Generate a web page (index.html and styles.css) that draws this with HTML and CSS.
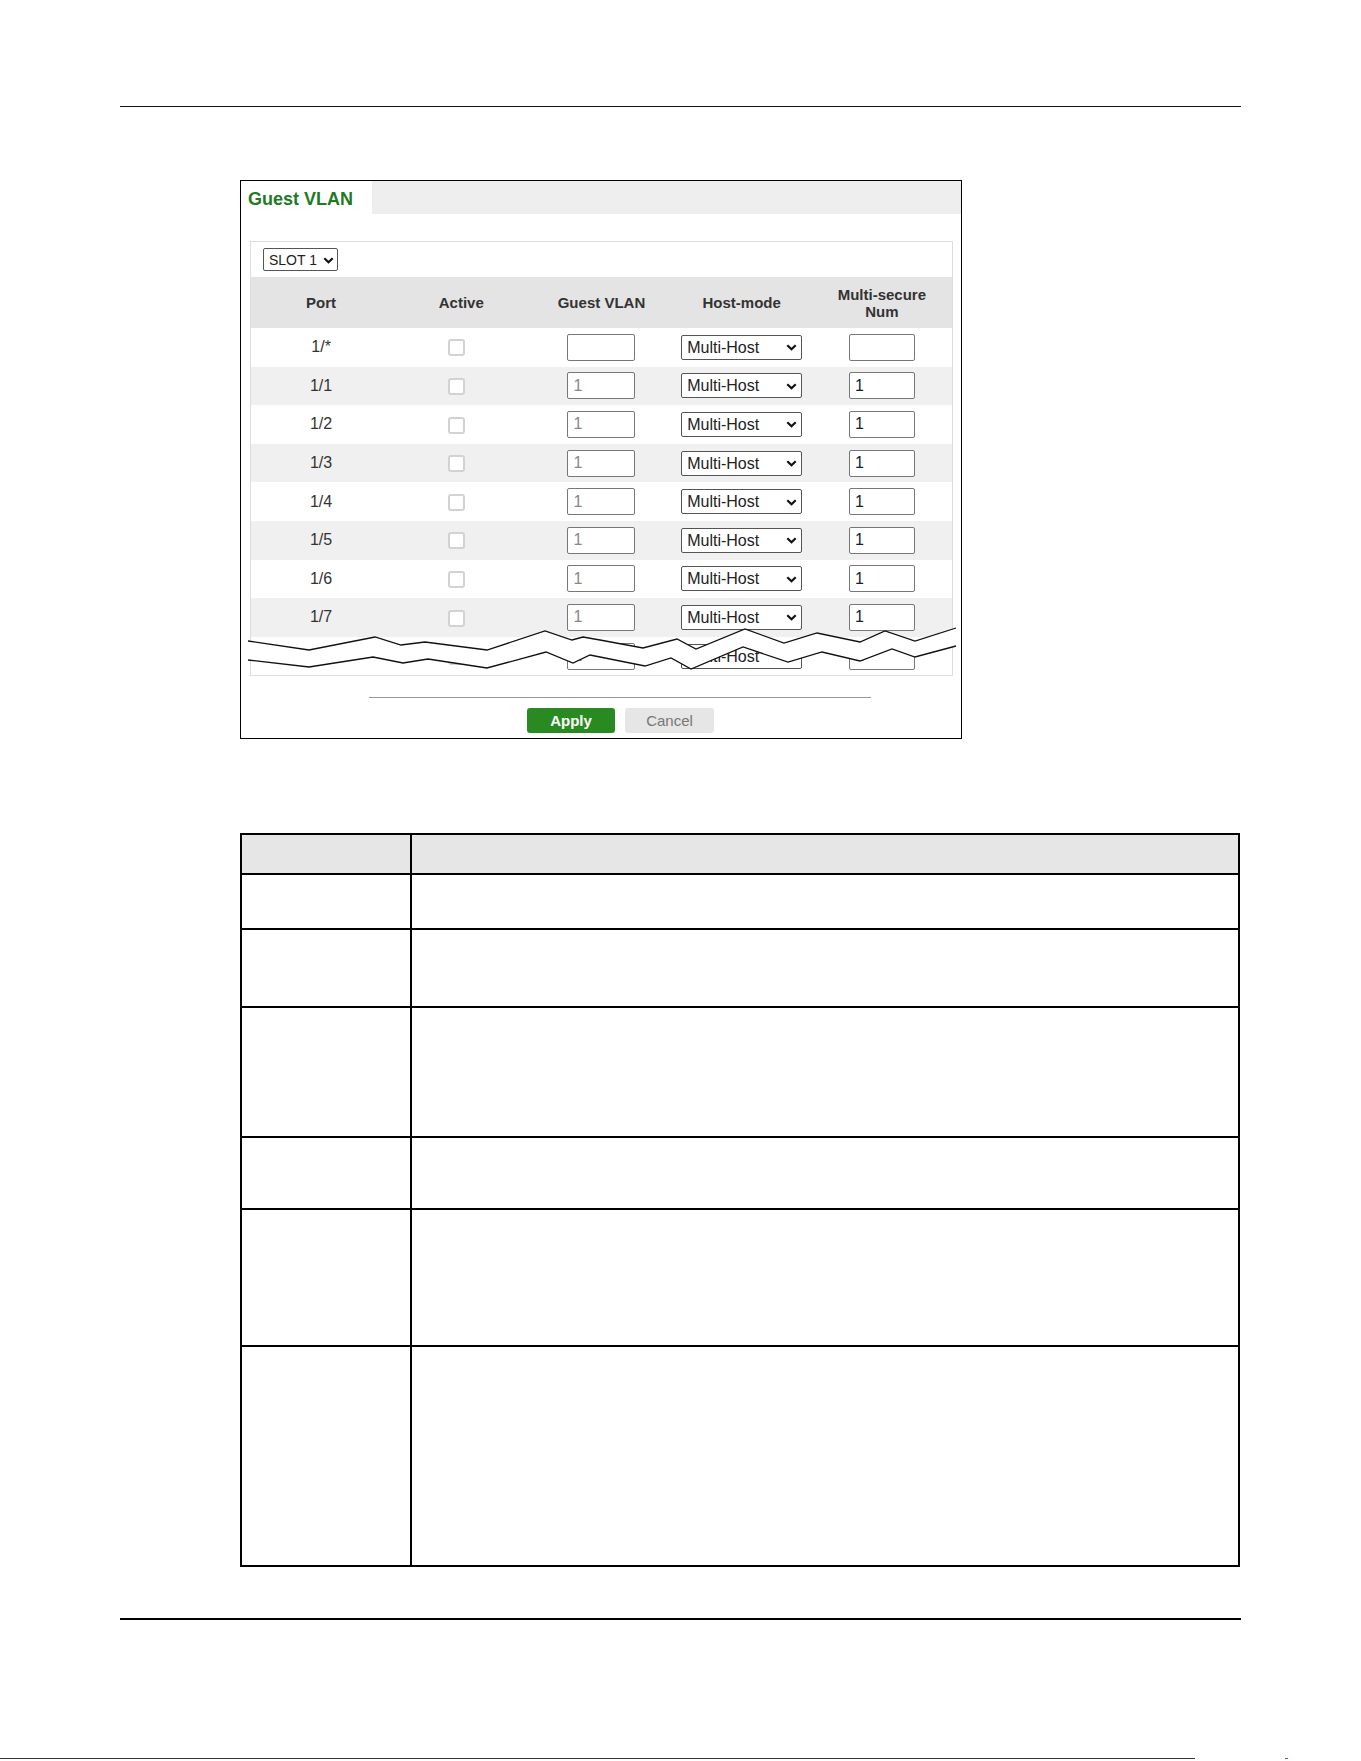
FILE: index.html
```html
<!DOCTYPE html>
<html lang="en">
<head>
  <meta charset="UTF-8" />
  <title>Guest VLAN</title>
  <link rel="stylesheet" href="styles.css">
</head>
<body>
  <div class="page">
    <div class="rule rule-top"></div>

    <div class="figure">
      <div class="tabbar"><div class="tab">Guest VLAN</div></div>

      <div class="panel">
        <div class="slot-row">
          <span class="dropdown slot">
            <select><option>SLOT 1</option></select>
            <svg class="chev" width="11" height="7" viewBox="0 0 11 7"><path d="M1.3 1.3 L5.5 5.3 L9.7 1.3" fill="none" stroke="#111" stroke-width="2.2"/></svg>
          </span>
        </div>

        <table class="ports">
          <thead>
            <tr><th>Port</th><th>Active</th><th>Guest VLAN</th><th>Host-mode</th><th>Multi-secure<br>Num</th></tr>
          </thead>
          <tbody>
            <tr>
              <td>1/*</td>
              <td><input type="checkbox" class="check"></td>
              <td><input type="text" class="vlan" value=""></td>
              <td><span class="dropdown host"><select><option>Multi-Host</option></select><svg class="chev" width="11" height="7" viewBox="0 0 11 7"><path d="M1.3 1.3 L5.5 5.3 L9.7 1.3" fill="none" stroke="#111" stroke-width="2.2"/></svg></span></td>
              <td><input type="text" class="num" value=""></td>
            </tr>
            <tr>
              <td>1/1</td>
              <td><input type="checkbox" class="check"></td>
              <td><input type="text" class="vlan" value="1"></td>
              <td><span class="dropdown host"><select><option>Multi-Host</option></select><svg class="chev" width="11" height="7" viewBox="0 0 11 7"><path d="M1.3 1.3 L5.5 5.3 L9.7 1.3" fill="none" stroke="#111" stroke-width="2.2"/></svg></span></td>
              <td><input type="text" class="num" value="1"></td>
            </tr>
            <tr>
              <td>1/2</td>
              <td><input type="checkbox" class="check"></td>
              <td><input type="text" class="vlan" value="1"></td>
              <td><span class="dropdown host"><select><option>Multi-Host</option></select><svg class="chev" width="11" height="7" viewBox="0 0 11 7"><path d="M1.3 1.3 L5.5 5.3 L9.7 1.3" fill="none" stroke="#111" stroke-width="2.2"/></svg></span></td>
              <td><input type="text" class="num" value="1"></td>
            </tr>
            <tr>
              <td>1/3</td>
              <td><input type="checkbox" class="check"></td>
              <td><input type="text" class="vlan" value="1"></td>
              <td><span class="dropdown host"><select><option>Multi-Host</option></select><svg class="chev" width="11" height="7" viewBox="0 0 11 7"><path d="M1.3 1.3 L5.5 5.3 L9.7 1.3" fill="none" stroke="#111" stroke-width="2.2"/></svg></span></td>
              <td><input type="text" class="num" value="1"></td>
            </tr>
            <tr>
              <td>1/4</td>
              <td><input type="checkbox" class="check"></td>
              <td><input type="text" class="vlan" value="1"></td>
              <td><span class="dropdown host"><select><option>Multi-Host</option></select><svg class="chev" width="11" height="7" viewBox="0 0 11 7"><path d="M1.3 1.3 L5.5 5.3 L9.7 1.3" fill="none" stroke="#111" stroke-width="2.2"/></svg></span></td>
              <td><input type="text" class="num" value="1"></td>
            </tr>
            <tr>
              <td>1/5</td>
              <td><input type="checkbox" class="check"></td>
              <td><input type="text" class="vlan" value="1"></td>
              <td><span class="dropdown host"><select><option>Multi-Host</option></select><svg class="chev" width="11" height="7" viewBox="0 0 11 7"><path d="M1.3 1.3 L5.5 5.3 L9.7 1.3" fill="none" stroke="#111" stroke-width="2.2"/></svg></span></td>
              <td><input type="text" class="num" value="1"></td>
            </tr>
            <tr>
              <td>1/6</td>
              <td><input type="checkbox" class="check"></td>
              <td><input type="text" class="vlan" value="1"></td>
              <td><span class="dropdown host"><select><option>Multi-Host</option></select><svg class="chev" width="11" height="7" viewBox="0 0 11 7"><path d="M1.3 1.3 L5.5 5.3 L9.7 1.3" fill="none" stroke="#111" stroke-width="2.2"/></svg></span></td>
              <td><input type="text" class="num" value="1"></td>
            </tr>
            <tr>
              <td>1/7</td>
              <td><input type="checkbox" class="check"></td>
              <td><input type="text" class="vlan" value="1"></td>
              <td><span class="dropdown host"><select><option>Multi-Host</option></select><svg class="chev" width="11" height="7" viewBox="0 0 11 7"><path d="M1.3 1.3 L5.5 5.3 L9.7 1.3" fill="none" stroke="#111" stroke-width="2.2"/></svg></span></td>
              <td><input type="text" class="num" value="1"></td>
            </tr>
            <tr>
              <td>1/8</td>
              <td><input type="checkbox" class="check"></td>
              <td><input type="text" class="vlan" value="1"></td>
              <td><span class="dropdown host"><select><option>Multi-Host</option></select><svg class="chev" width="11" height="7" viewBox="0 0 11 7"><path d="M1.3 1.3 L5.5 5.3 L9.7 1.3" fill="none" stroke="#111" stroke-width="2.2"/></svg></span></td>
              <td><input type="text" class="num" value="1"></td>
            </tr>
          </tbody>
        </table>

        <!-- torn edge: the list goes on past 1/8 -->
        <svg class="tear" width="712" height="50" viewBox="246 625 712 50">
          <polygon fill="#fff" points="248,641 309,650 375,637 401,645 425,642 487,650 545,631 572,640 583,637 600,640 643,648 677,639 696,649 745,629 784,643 817,633 860,642 885,631 915,641 956,628 956,646 915,657 892,649 860,661 822,652 788,662 743,647 691,669 671,658 645,666 600,657 590,655 573,663 546,652 487,668 428,659 403,663 373,657 309,667 248,660"/>
          <polyline fill="none" stroke="#111" stroke-width="1.3" points="248,641 309,650 375,637 401,645 425,642 487,650 545,631 572,640 583,637 600,640 643,648 677,639 696,649 745,629 784,643 817,633 860,642 885,631 915,641 956,628"/>
          <polyline fill="none" stroke="#111" stroke-width="1.3" points="248,660 309,667 373,657 403,663 428,659 487,668 546,652 573,663 590,655 600,657 645,666 671,658 691,669 743,647 788,662 822,652 860,661 892,649 915,657 956,646"/>
        </svg>
      </div>

      <div class="sep"></div>
      <div class="buttons">
        <button class="btn apply">Apply</button>
        <button class="btn cancel">Cancel</button>
      </div>
    </div>

    <table class="desc">
      <tr class="head"><td class="label"></td><td></td></tr>
      <tr class="r1"><td class="label"></td><td></td></tr>
      <tr class="r2"><td class="label"></td><td></td></tr>
      <tr class="r3"><td class="label"></td><td></td></tr>
      <tr class="r4"><td class="label"></td><td></td></tr>
      <tr class="r5"><td class="label"></td><td></td></tr>
      <tr class="r6"><td class="label"></td><td></td></tr>
    </table>

    <div class="rule rule-bottom"></div>
    <div class="cutoff"></div>
  </div>
</body>
</html>
```

FILE: styles.css
```css
* { box-sizing: border-box; }
body { margin: 0; font-family: "Liberation Sans", Arial, sans-serif; color: #333; background: #fff; }
.page { padding-top: 106px; }

.rule { margin-left: 120px; width: 1121px; }
.rule-top { border-top: 1px solid #111; }
.rule-bottom { margin-top: 51px; border-top: 2px solid #000; }
.cutoff { position: relative; margin-top: 138px; width: 1195px; border-top: 1px solid #333; }
.cutoff::after { content: ""; position: absolute; left: 1285px; top: -1px; width: 3px; height: 1px; background: #a44; }

/* screenshot frame */
.figure { margin: 73px 0 0 240px; width: 722px; height: 559px; border: 1px solid #000; }
.tabbar { height: 33px; background: #eee; }
.tab { width: 131px; height: 33px; background: #fff; color: #1f7a25; font-size: 18px; font-weight: bold; padding: 8px 0 0 7px; }

.panel { position: relative; margin: 27px 8px 0 9px; border: 1px solid #ddd; }
.slot-row { height: 35px; padding: 6px 0 0 12px; }

.dropdown { position: relative; display: inline-block; vertical-align: middle; }
.dropdown select { appearance: none; -webkit-appearance: none; display: block; margin: 0; background: #fff; border: 1px solid #555; border-radius: 2px; font-family: inherit; color: #222; padding: 0 0 0 5px; }
.dropdown .chev { position: absolute; top: 50%; margin-top: -3px; pointer-events: none; }
.slot select { width: 75px; height: 23px; font-size: 14px; }
.slot .chev { right: 4px; }
.host select { width: 121px; height: 25px; font-size: 16px; }
.host .chev { right: 5px; }

.ports { width: 100%; border-collapse: collapse; table-layout: fixed; }
.ports th { height: 51px; padding: 0; background: #e4e4e4; font-size: 15px; line-height: 17px; font-weight: bold; color: #333; }
.ports td { height: 38.6px; padding: 0; text-align: center; font-size: 16px; color: #333; }
.ports tbody tr:nth-child(even) td { background: #f0f0f0; }

.check { appearance: none; -webkit-appearance: none; display: inline-block; vertical-align: middle; width: 17px; height: 17px; margin: 0 9px 0 0; background: #fff; border: 2px solid #d2d2d2; border-radius: 3px; }
.vlan, .num { display: inline-block; vertical-align: middle; height: 27px; margin: 0; padding: 0 0 0 5px; border: 1px solid #777; border-radius: 2px; font-family: inherit; font-size: 16px; background: #fff; }
.vlan { width: 68px; color: #888; }
.num { width: 66px; color: #123; }

.tear { position: absolute; left: -5px; top: 383px; overflow: visible; }

.sep { margin: 21px 0 0 128px; width: 502px; border-top: 1px solid #999; }
.buttons { display: flex; gap: 10px; margin: 10px 0 0 286px; }
.btn { height: 25px; padding: 0; border: none; border-radius: 3px; font-family: inherit; font-size: 15px; }
.apply { width: 88px; background: #2a8a22; color: #fff; font-weight: bold; }
.cancel { width: 89px; background: #e6e6e6; color: #777; }

/* field description table */
.desc { margin: 94px 0 0 240px; width: 1000px; border-collapse: collapse; border: 2px solid #000; }
.desc td { border: 2px solid #000; padding: 0; }
.desc .label { width: 170px; }
.desc .head td { height: 40px; background: #e6e6e6; }
.desc .r1 td { height: 55px; }
.desc .r2 td { height: 78px; }
.desc .r3 td { height: 130px; }
.desc .r4 td { height: 72px; }
.desc .r5 td { height: 137px; }
.desc .r6 td { height: 220px; }
```
